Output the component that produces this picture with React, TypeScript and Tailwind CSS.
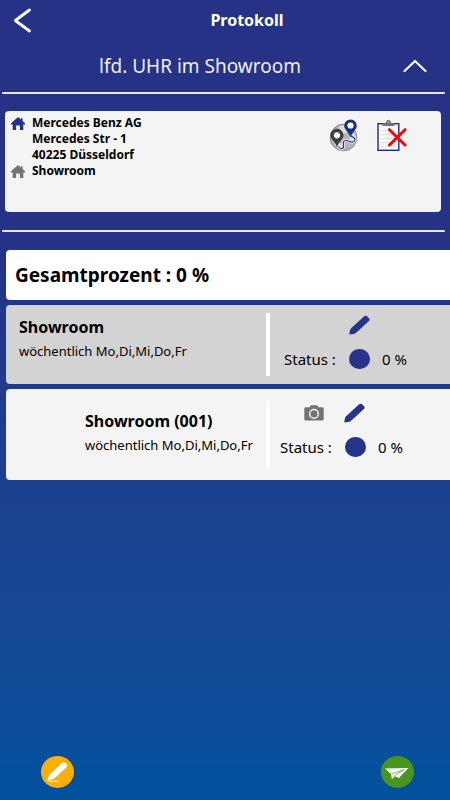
import { useState } from 'react';

const entries = [
  { id: 1, title: 'Showroom', interval: 'wöchentlich Mo,Di,Mi,Do,Fr', percent: 0, child: false },
  { id: 2, title: 'Showroom (001)', interval: 'wöchentlich Mo,Di,Mi,Do,Fr', percent: 0, child: true },
];

function HomeIcon({ className }: { className: string }) {
  return (
    <svg viewBox="0 0 14 13" className={`h-[13px] w-[14px] ${className}`} fill="currentColor" aria-hidden="true">
      <path d="M7 0 0 6.2V7.400h1.700V13h3.400V8.400h3.800V13h3.400V7.400H14V6.200l-2.400-2.100V1.200H9.800v1.300z" />
    </svg>
  );
}

function PencilIcon() {
  return (
    <svg viewBox="0 0 21 20" className="h-5 w-[21px] text-[#25338a]" fill="currentColor" aria-hidden="true">
      <path d="M.4 19.6c.1-2.900.5-5 2-6.500L14.900 1.400c1-.9 1.900-1 2.800-.3l2.300 2.200c.9.9.8 1.800-.1 2.700L7.400 17.600c-1.600 1.400-3.900 1.900-7 2z" />
    </svg>
  );
}

function CameraIcon() {
  return (
    <svg viewBox="0 0 20 16" className="h-4 w-5 text-[#737373]" fill="currentColor" aria-hidden="true">
      <path d="M6.800.3h6.400l1.400 2h3.600c1 0 1.500.6 1.500 1.500v10.100c0 .9-.5 1.500-1.500 1.500H1.800c-1 0-1.500-.6-1.500-1.500V3.800c0-.9.500-1.500 1.500-1.500h3.600z" />
      <circle cx="10" cy="8.900" r="4.300" fill="none" stroke="#f4f4f4" strokeWidth="1.500" />
    </svg>
  );
}

function RouteIcon() {
  return (
    <svg viewBox="0 0 29 33" className="h-[33px] w-[29px]" aria-hidden="true">
      <circle cx="14.500" cy="18.500" r="13.300" fill="#b5b5b5" stroke="#858585" />
      <path d="M10 7.500c4-2 7-1.500 9 1l-1 5-5 2zM20 17l6-3 1 7-5 3zM5 25l7-1 3 6-5-1z" fill="#dedede" />
      <path d="M9 27.500c3 3.500 6 2.500 5.500-1-.4-3-.4-5.500 3-5 3 .5 6 3.500 8 .5 1.800-2.600-1.500-3.500-4-5.500" fill="none" stroke="#e8e8ee" strokeWidth="3" />
      <path d="M9 27.500c3 3.500 6 2.500 5.500-1-.4-3-.4-5.500 3-5 3 .5 6 3.500 8 .5 1.800-2.600-1.500-3.500-4-5.500" fill="none" stroke="#22308a" strokeWidth="1.100" />
      <path d="M8 28.300C6.500 22.500 1.500 20.500 1.500 16.300a6.500 6.500 0 0 1 13 0c0 4.200-5 6.200-6.500 12z" fill="#3d3d3d" />
      <circle cx="8" cy="16.300" r="3.100" fill="#fff" />
      <path d="M21.500 18.500C20 12.700 15.200 11 15.200 6.700a6.300 6.300 0 0 1 12.600 0c0 4.300-4.800 6-6.300 11.800z" fill="#1c2c8a" />
      <circle cx="21.500" cy="6.500" r="3.100" fill="#fff" />
    </svg>
  );
}

function ClipboardIcon() {
  return (
    <svg viewBox="0 0 30 33" className="h-[33px] w-[30px]" aria-hidden="true">
      <rect x="1" y="4.700" width="20.800" height="26.600" fill="#f8f8f8" stroke="#1d2c89" strokeWidth="1.400" />
      <path d="M4 11.500h14M4 15.500h14M4 19.500h14M4 23.500h14M4 27.500h14" stroke="#dedede" strokeWidth="0.800" />
      <path d="M5.500 7V4.200h3.300c.4-2 1.300-3.500 2.700-3.500s2.300 1.500 2.700 3.500h3.300V7z" fill="#747474" />
      <circle cx="11.500" cy="3" r="0.900" fill="#aaa" />
      <path d="M12.500 10.700l15.500 15.300M28 10.700L12.500 26" stroke="#f80505" strokeWidth="3" strokeLinecap="round" />
    </svg>
  );
}

function Divider() {
  return <div className="ml-[2px] mr-[5px] h-[2px] rounded-full bg-[#e8e9f4]" />;
}

export default function App() {
  const [open, setOpen] = useState(true);

  return (
    <div className="flex min-h-screen flex-col bg-linear-to-b from-[#253285] from-30% to-[#00529e] font-['Noto_Sans','Open_Sans',sans-serif] text-black">
      <header className="grid h-10 grid-cols-[44px_1fr_44px] items-center text-white">
        <button type="button" aria-label="Zurück" className="flex h-10 items-center pl-[13px]">
          <svg viewBox="0 0 19 25" className="h-[25px] w-[19px]" fill="none" stroke="currentColor" strokeWidth="2.800" strokeLinecap="round" strokeLinejoin="round">
            <path d="M16.500 2 2.300 12.500 16.500 23" />
          </svg>
        </button>
        <h1 className="pl-11 text-center text-[16px] leading-5 font-bold">Protokoll</h1>
      </header>

      <div className="grid h-[52px] grid-cols-[20px_1fr_70px] items-center text-white">
        <h2 className="col-start-2 text-center text-[19px] leading-6 text-[#eeeff8]">lfd. UHR im Showroom</h2>
        <button
          type="button"
          aria-label="Details ein- oder ausklappen"
          aria-expanded={open}
          onClick={() => setOpen(!open)}
          className="flex h-10 items-center justify-center"
        >
          <svg viewBox="0 0 24 14" className="h-[14px] w-6" fill="none" stroke="currentColor" strokeWidth="2.200" strokeLinecap="round" strokeLinejoin="round">
            <path d="M1.500 12 12 2l10.500 10" />
          </svg>
        </button>
      </div>
      <Divider />

      {open && (
        <>
          <section className="mt-[17px] mr-[9px] mb-[18px] ml-[5px] flex min-h-[101px] justify-between rounded bg-[#f4f4f4] pt-1 pr-[34px] pl-[6px]">
            <div className="text-[12px] leading-4 font-bold">
              <div className="flex gap-[7px]">
                <HomeIcon className="mt-[2px] text-[#25338a]" />
                <address className="not-italic">
                  Mercedes Benz AG
                  <br />
                  Mercedes Str - 1
                  <br />
                  40225 Düsseldorf
                </address>
              </div>
              <div className="flex gap-[7px]">
                <HomeIcon className="mt-[2px] text-[#737373]" />
                <span>Showroom</span>
              </div>
            </div>
            <div className="flex items-start gap-[19px] pt-1">
              <button type="button" aria-label="Route">
                <RouteIcon />
              </button>
              <button type="button" aria-label="Auftrag abbrechen">
                <ClipboardIcon />
              </button>
            </div>
          </section>
          <Divider />
        </>
      )}

      <main className="mt-[18px] flex flex-col gap-[5px] pl-[6px]">
        <div className="flex h-[50px] items-center rounded-l bg-white pl-[9px] text-[19px] leading-6 font-bold">
          Gesamtprozent : 0 %
        </div>

        {entries.map((entry) => (
          <article
            key={entry.id}
            className={`flex rounded-l ${entry.child ? 'min-h-[91px] bg-[#f4f4f4] py-3 pl-[79px]' : 'min-h-[79px] bg-[#d3d3d3] py-2 pl-[13px]'}`}
          >
            <div className={`min-w-0 flex-1 ${entry.child ? 'pt-2' : 'pt-[2px]'}`}>
              <h3 className="text-[16px] leading-6 font-bold">{entry.title}</h3>
              <p className="text-[13px] leading-6 whitespace-nowrap">{entry.interval}</p>
            </div>
            <div className={`flex w-[184px] flex-col gap-[10px] border-l-4 border-white ${entry.child ? 'pl-[10px]' : 'pl-[14px]'}`}>
              <div className={`flex h-6 items-center gap-5 ${entry.child ? 'pl-6' : 'pl-[65px]'}`}>
                {entry.child && (
                  <button type="button" aria-label="Foto aufnehmen">
                    <CameraIcon />
                  </button>
                )}
                <button type="button" aria-label="Bearbeiten">
                  <PencilIcon />
                </button>
              </div>
              <div className="grid grid-cols-[65px_21px_1fr] items-center text-[15px] leading-6">
                <span>Status :</span>
                <span className="h-5 w-[21px] rounded-full bg-[#25338a]" />
                <span className="pl-3">{entry.percent} %</span>
              </div>
            </div>
          </article>
        ))}
      </main>

      <footer className="mt-auto flex justify-between pt-6 pr-9 pb-3 pl-10">
        <button type="button" aria-label="Notiz schreiben">
          <svg viewBox="0 0 34 32" className="h-8 w-[34px]">
            <ellipse cx="17.500" cy="16" rx="16.500" ry="15.900" fill="#fdaf08" />
            <path d="M7.200 24.800c.4-2.500 1.100-4.600 2.700-6.400L21.500 7.200c1.300-1.200 2.500-1.400 3.700-.4l1.100 1c1.200 1.200 1.100 2.300-.1 3.600L15.300 21.600c-2.200 1.800-4.700 2.700-8.100 3.200z" fill="#fff" />
            <path d="M9 25.300h10.500" stroke="#fff" strokeWidth="1.200" strokeDasharray="4 1" />
          </svg>
        </button>
        <button type="button" aria-label="Protokoll senden">
          <svg viewBox="0 0 34 32" className="h-8 w-[34px]">
            <ellipse cx="17.500" cy="16" rx="16.500" ry="15.900" fill="#49961f" />
            <path d="M5 12.400 28.500 12 18.700 22.300l-3.200-2-3.600 3-.9-5.400z" fill="#fff" />
            <path d="M11.200 17.900 24 13.700l-9.200 5.800-2.600 3" fill="none" stroke="#49961f" strokeWidth="0.700" />
          </svg>
        </button>
      </footer>
    </div>
  );
}
